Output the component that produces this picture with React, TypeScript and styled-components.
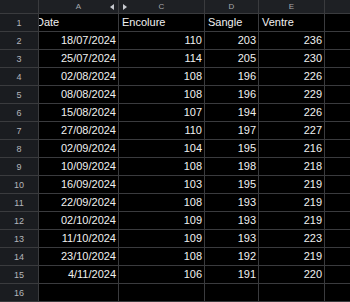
import React from "react";
import styled, { createGlobalStyle } from "styled-components";

const Global = createGlobalStyle`
  html, body { margin: 0; padding: 0; background: #000; }
  body { font-family: "Liberation Sans", Arial, sans-serif; overflow: hidden; }
`;

const Sheet = styled.div`
  display: grid;
  grid-template-columns: 38px 79px 85px 53px 65px 1fr;
  grid-template-rows: 13px repeat(16, 17px);
  gap: 1px;
  background: #3a3b3e;
  width: 350px;
  height: 302px;
  overflow: hidden;
`;

const ColHead = styled.div`
  position: relative;
  background: #1e2024;
  color: #a6a8ad;
  font-size: 8px;
  display: flex;
  align-items: center;
  justify-content: center;
  line-height: 1;
`;

const RowHead = styled.div`
  background: #1a1c20;
  color: #b4b6bb;
  font-size: 9px;
  display: flex;
  align-items: center;
  justify-content: center;
`;

const Cell = styled.div<{ $align?: "left" | "right"; $shift?: number }>`
  background: #000;
  color: #f0f0f0;
  font-size: 11px;
  display: flex;
  align-items: center;
  justify-content: ${(p) => (p.$align === "right" ? "flex-end" : "flex-start")};
  padding: ${(p) => (p.$align === "right" ? "0 2px 1px 0" : "0 0 1px 3px")};
  white-space: nowrap;
  overflow: hidden;
  & > span {
    margin-left: ${(p) => p.$shift ?? 0}px;
  }
`;

const Tri = styled.svg<{ $side: "left" | "right" }>`
  position: absolute;
  top: 4px;
  ${(p) => (p.$side === "left" ? "right: 4px;" : "left: 4px;")}
  width: 4px;
  height: 6px;
`;

const rows: [string, number, number, number][] = [
  ["18/07/2024", 110, 203, 236],
  ["25/07/2024", 114, 205, 230],
  ["02/08/2024", 108, 196, 226],
  ["08/08/2024", 108, 196, 229],
  ["15/08/2024", 107, 194, 226],
  ["27/08/2024", 110, 197, 227],
  ["02/09/2024", 104, 195, 216],
  ["10/09/2024", 108, 198, 218],
  ["16/09/2024", 103, 195, 219],
  ["22/09/2024", 108, 193, 219],
  ["02/10/2024", 109, 193, 219],
  ["11/10/2024", 109, 193, 223],
  ["23/10/2024", 108, 192, 219],
  ["4/11/2024", 106, 191, 220],
];

export default function App() {
  return (
    <>
      <Global />
      <Sheet>
        <ColHead />
        <ColHead>
          A
          <Tri $side="left" viewBox="0 0 4 6">
            <path d="M4 0 L0 3 L4 6 Z" fill="#c8cacf" />
          </Tri>
        </ColHead>
        <ColHead>
          C
          <Tri $side="right" viewBox="0 0 4 6">
            <path d="M0 0 L4 3 L0 6 Z" fill="#c8cacf" />
          </Tri>
        </ColHead>
        <ColHead>D</ColHead>
        <ColHead>E</ColHead>
        <ColHead />

        <RowHead>1</RowHead>
        <Cell $shift={-6}>
          <span>Date</span>
        </Cell>
        <Cell>
          <span>Encolure</span>
        </Cell>
        <Cell>
          <span>Sangle</span>
        </Cell>
        <Cell>
          <span>Ventre</span>
        </Cell>
        <Cell />

        {rows.map((r, i) => (
          <React.Fragment key={i}>
            <RowHead>{i + 2}</RowHead>
            <Cell $align="right">{r[0]}</Cell>
            <Cell $align="right">{r[1]}</Cell>
            <Cell $align="right">{r[2]}</Cell>
            <Cell $align="right">{r[3]}</Cell>
            <Cell />
          </React.Fragment>
        ))}

        <RowHead>16</RowHead>
        <Cell />
        <Cell />
        <Cell />
        <Cell />
        <Cell />
      </Sheet>
    </>
  );
}
